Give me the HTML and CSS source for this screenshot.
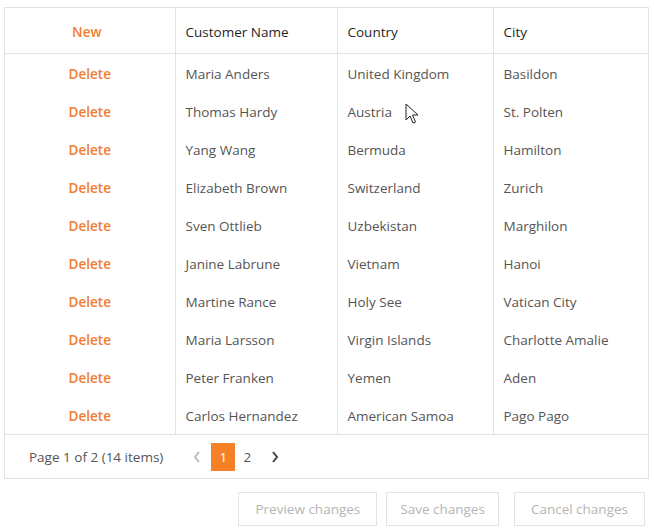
FILE: index.html
```html
<!DOCTYPE html>
<html>
<head>
<meta charset="utf-8">
<link rel="stylesheet" href="styles.css">
</head>
<body>
<div class="wrap">
  <div class="grid">
    <table class="tbl">
      <colgroup>
        <col class="c1"><col class="c2"><col class="c3"><col class="c4">
      </colgroup>
      <thead>
        <tr><th class="cmd">New</th><th>Customer Name</th><th>Country</th><th>City</th></tr>
      </thead>
      <tbody>
        <tr><td class="cmd">Delete</td><td>Maria Anders</td><td>United Kingdom</td><td>Basildon</td></tr>
        <tr><td class="cmd">Delete</td><td>Thomas Hardy</td><td>Austria</td><td>St. Polten</td></tr>
        <tr><td class="cmd">Delete</td><td>Yang Wang</td><td>Bermuda</td><td>Hamilton</td></tr>
        <tr><td class="cmd">Delete</td><td>Elizabeth Brown</td><td>Switzerland</td><td>Zurich</td></tr>
        <tr><td class="cmd">Delete</td><td>Sven Ottlieb</td><td>Uzbekistan</td><td>Marghilon</td></tr>
        <tr><td class="cmd">Delete</td><td>Janine Labrune</td><td>Vietnam</td><td>Hanoi</td></tr>
        <tr><td class="cmd">Delete</td><td>Martine Rance</td><td>Holy See</td><td>Vatican City</td></tr>
        <tr><td class="cmd">Delete</td><td>Maria Larsson</td><td>Virgin Islands</td><td>Charlotte Amalie</td></tr>
        <tr><td class="cmd">Delete</td><td>Peter Franken</td><td>Yemen</td><td>Aden</td></tr>
        <tr><td class="cmd">Delete</td><td>Carlos Hernandez</td><td>American Samoa</td><td>Pago Pago</td></tr>
      </tbody>
    </table>
    <div class="pager">
      <span class="summary">Page 1 of 2 (14 items)</span>
      <div class="pages">
        <span class="arrow prev"><svg width="8" height="12" viewBox="0 0 8 12"><path d="M6 1 L2 6 L6 11" fill="none" stroke="currentColor" stroke-width="2"/></svg></span>
        <span class="page active">1</span>
        <span class="page">2</span>
        <span class="arrow next"><svg width="8" height="12" viewBox="0 0 8 12"><path d="M2 1 L6 6 L2 11" fill="none" stroke="currentColor" stroke-width="2"/></svg></span>
      </div>
    </div>
  </div>
  <div class="actions">
    <button class="btn b-preview">Preview changes</button>
    <button class="btn b-save">Save changes</button>
    <button class="btn b-cancel">Cancel changes</button>
  </div>
  <svg class="cursor" width="14" height="22" viewBox="0 0 14 22"><path d="M1 1 L1 17 L5 13 L8 20 L10.5 19 L7.5 12 L13 12 Z" fill="#fff" stroke="#222" stroke-width="1" stroke-linejoin="round"/></svg>
</div>
</body>
</html>
```
FILE: styles.css
```css
html, body {
  margin: 0;
  padding: 0;
  background: #fff;
}
body {
  font-family: "Open Sans", "Noto Sans", sans-serif;
  font-size: 13.5px;
  color: #555;
}
.wrap {
  position: relative;
  width: 654px;
  height: 532px;
  padding: 7px 5px 0 4px;
  box-sizing: border-box;
}
.grid {
  border: 1px solid #e3e3e3;
  width: 645px;
  box-sizing: border-box;
}
.tbl {
  width: 100%;
  border-collapse: collapse;
  table-layout: fixed;
}
.c1 { width: 170px; }
.c2 { width: 162px; }
.c3 { width: 156px; }
.tbl th, .tbl td {
  text-align: left;
  padding: 0 10px;
  white-space: nowrap;
  overflow: hidden;
}
.tbl th {
  font-weight: normal;
  color: #1f1f1f;
  height: 43px;
  padding-top: 2px;
  border-bottom: 1px solid #e3e3e3;
  border-left: 1px solid #e3e3e3;
}
.tbl td {
  height: 37px;
  padding-top: 1px;
  border-left: 1px solid #e3e3e3;
}
.tbl th:first-child, .tbl td:first-child { border-left: none; }
.tbl .cmd {
  text-align: center;
  color: #f07d2f;
  font-weight: 600;
}
.tbl th.cmd { padding-right: 16px; }
.pager {
  display: flex;
  align-items: center;
  height: 43px;
  border-top: 1px solid #e3e3e3;
  padding-left: 24px;
}
.summary {
  color: #555;
  margin-right: 26px;
}
.pages {
  display: flex;
  align-items: center;
}
.arrow {
  display: flex;
  align-items: center;
  justify-content: center;
  width: 16px;
  height: 28px;
  color: #444;
}
.arrow.prev { color: #bbb; margin-right: 6px; }
.arrow.next { margin-left: 8px; }
.page {
  width: 24px;
  height: 28px;
  display: flex;
  align-items: center;
  justify-content: center;
  color: #555;
}
.page.active {
  background: #f58025;
  color: #fff;
}
.actions {
  display: flex;
  justify-content: flex-end;
  gap: 9px;
  margin-top: 13px;
  padding-right: 4px;
}
.btn {
  font-family: "Open Sans", "Noto Sans", sans-serif;
  font-size: 13.5px;
  color: #b5b5b5;
  background: #fff;
  border: 1px solid #e3e3e3;
  height: 34px;
  padding: 0 15px;
  margin: 0;
}
.b-preview { padding: 0 16px; }
.b-save { padding: 0 13px; }
.b-cancel { margin-left: 6px; padding: 0 16px; }
.cursor {
  position: absolute;
  left: 405px;
  top: 103px;
}
```
